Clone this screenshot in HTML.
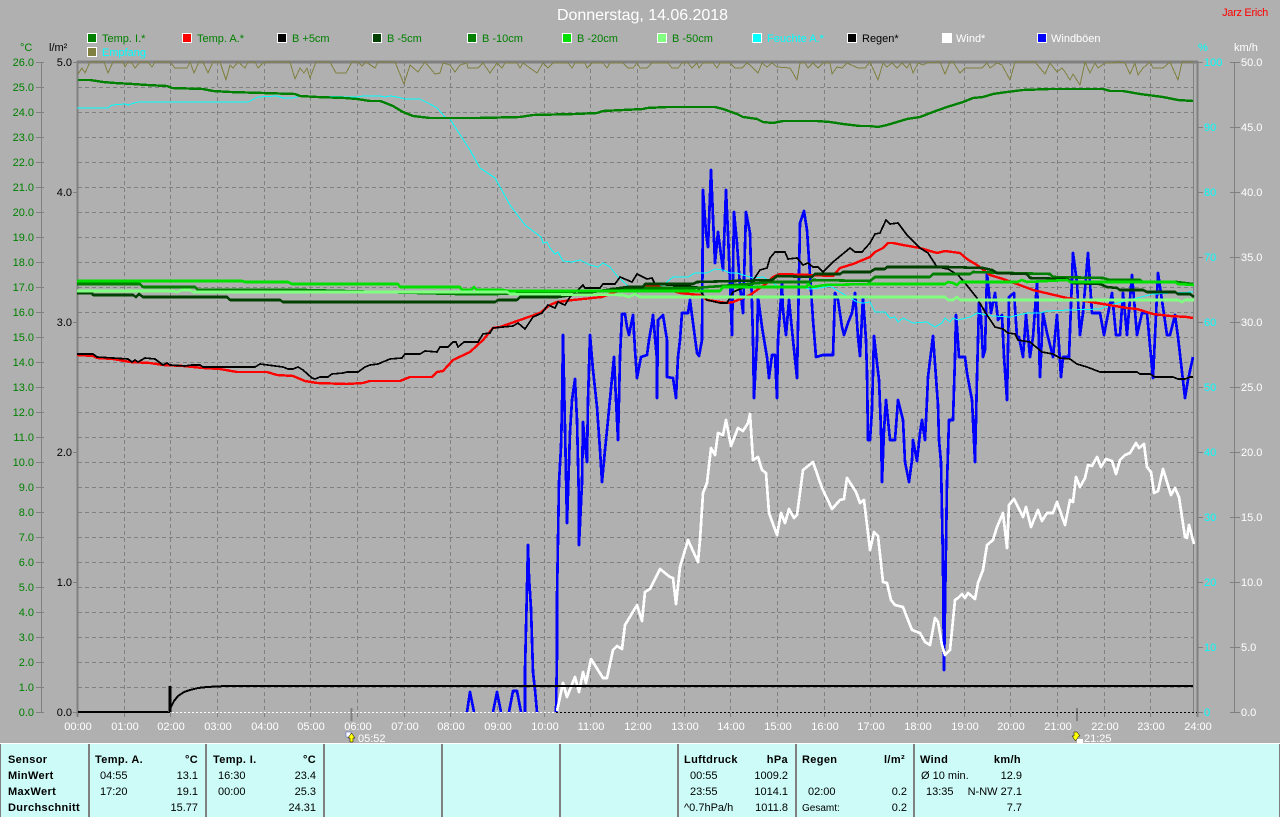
<!DOCTYPE html>
<html><head><meta charset="utf-8"><title>Donnerstag, 14.06.2018</title>
<style>
html,body{margin:0;padding:0;background:#b0b0b0;width:1280px;height:817px;overflow:hidden}
svg{display:block}
text{font-family:"Liberation Sans",sans-serif;font-size:11px}
.g{fill:#008000}.w{fill:#fff}.c{fill:#00ffff}.k{fill:#000}
.e{text-anchor:end}.m{text-anchor:middle}
.b{font-weight:bold;letter-spacing:.35px;fill:#000}
polyline{fill:none;stroke-linejoin:round}
.grid line{stroke:#808080;stroke-width:1;stroke-dasharray:4 3;shape-rendering:crispEdges}
.ax line{stroke:#808080;shape-rendering:crispEdges}
.data polyline{shape-rendering:crispEdges}
</style></head><body>
<svg width="1280" height="817" viewBox="0 0 1280 817" xmlns="http://www.w3.org/2000/svg">
<rect width="1280" height="817" fill="#b0b0b0"/>
<text x="642.5" y="20" class="m" style="font-size:16px;fill:#fff" textLength="171">Donnerstag, 14.06.2018</text>
<text x="1268" y="16" class="e" style="fill:#f00;letter-spacing:-.3px">Jarz Erich</text>

<g stroke="#fff" stroke-width="1" shape-rendering="crispEdges">
<rect x="87.5" y="33.5" width="9" height="9" fill="#008000"/>
<rect x="182.5" y="33.5" width="9" height="9" fill="#ff0000"/>
<rect x="277.5" y="33.5" width="9" height="9" fill="#000"/>
<rect x="372.5" y="33.5" width="9" height="9" fill="#004000"/>
<rect x="467.5" y="33.5" width="9" height="9" fill="#008000"/>
<rect x="562.5" y="33.5" width="9" height="9" fill="#00e000"/>
<rect x="657.5" y="33.5" width="9" height="9" fill="#80ff80"/>
<rect x="752.5" y="33.5" width="9" height="9" fill="#00ffff"/>
<rect x="847.5" y="33.5" width="9" height="9" fill="#000"/>
<rect x="942.5" y="33.5" width="9" height="9" fill="#fff"/>
<rect x="1037.5" y="33.5" width="9" height="9" fill="#0000ff"/>
<rect x="87.5" y="47.5" width="9" height="9" fill="#808040"/>
</g>
<text x="102" y="42" class="g">Temp. I.*</text>
<text x="197" y="42" class="g">Temp. A.*</text>
<text x="292" y="42" class="g">B +5cm</text>
<text x="387" y="42" class="g">B -5cm</text>
<text x="482" y="42" class="g">B -10cm</text>
<text x="577" y="42" class="g">B -20cm</text>
<text x="672" y="42" class="g">B -50cm</text>
<text x="767" y="42" class="c">Feuchte A.*</text>
<text x="862" y="42" class="k">Regen*</text>
<text x="956" y="42" class="w">Wind*</text>
<text x="1051" y="42" class="w">Windböen</text>
<text x="102" y="56" class="c">Empfang</text>

<text x="20" y="51" class="g">°C</text>
<text x="49" y="51" class="k">l/m²</text>
<text x="1198" y="51" class="c">%</text>
<text x="1234" y="51" class="w">km/h</text>

<g class="grid">
<line x1="124.5" y1="62" x2="124.5" y2="717"/><line x1="170.5" y1="62" x2="170.5" y2="717"/><line x1="217.5" y1="62" x2="217.5" y2="717"/><line x1="264.5" y1="62" x2="264.5" y2="717"/><line x1="310.5" y1="62" x2="310.5" y2="717"/><line x1="357.5" y1="62" x2="357.5" y2="717"/><line x1="404.5" y1="62" x2="404.5" y2="717"/><line x1="450.5" y1="62" x2="450.5" y2="717"/><line x1="497.5" y1="62" x2="497.5" y2="717"/><line x1="544.5" y1="62" x2="544.5" y2="717"/><line x1="590.5" y1="62" x2="590.5" y2="717"/><line x1="637.5" y1="62" x2="637.5" y2="717"/><line x1="684.5" y1="62" x2="684.5" y2="717"/><line x1="730.5" y1="62" x2="730.5" y2="717"/><line x1="777.5" y1="62" x2="777.5" y2="717"/><line x1="824.5" y1="62" x2="824.5" y2="717"/><line x1="870.5" y1="62" x2="870.5" y2="717"/><line x1="917.5" y1="62" x2="917.5" y2="717"/><line x1="964.5" y1="62" x2="964.5" y2="717"/><line x1="1010.5" y1="62" x2="1010.5" y2="717"/><line x1="1057.5" y1="62" x2="1057.5" y2="717"/><line x1="1104.5" y1="62" x2="1104.5" y2="717"/><line x1="1150.5" y1="62" x2="1150.5" y2="717"/>
<line x1="78" y1="87.5" x2="1194" y2="87.5"/><line x1="78" y1="112.5" x2="1194" y2="112.5"/><line x1="78" y1="137.5" x2="1194" y2="137.5"/><line x1="78" y1="162.5" x2="1194" y2="162.5"/><line x1="78" y1="187.5" x2="1194" y2="187.5"/><line x1="78" y1="212.5" x2="1194" y2="212.5"/><line x1="78" y1="237.5" x2="1194" y2="237.5"/><line x1="78" y1="262.5" x2="1194" y2="262.5"/><line x1="78" y1="287.5" x2="1194" y2="287.5"/><line x1="78" y1="312.5" x2="1194" y2="312.5"/><line x1="78" y1="337.5" x2="1194" y2="337.5"/><line x1="78" y1="362.5" x2="1194" y2="362.5"/><line x1="78" y1="387.5" x2="1194" y2="387.5"/><line x1="78" y1="412.5" x2="1194" y2="412.5"/><line x1="78" y1="437.5" x2="1194" y2="437.5"/><line x1="78" y1="462.5" x2="1194" y2="462.5"/><line x1="78" y1="487.5" x2="1194" y2="487.5"/><line x1="78" y1="512.5" x2="1194" y2="512.5"/><line x1="78" y1="537.5" x2="1194" y2="537.5"/><line x1="78" y1="562.5" x2="1194" y2="562.5"/><line x1="78" y1="587.5" x2="1194" y2="587.5"/><line x1="78" y1="612.5" x2="1194" y2="612.5"/><line x1="78" y1="637.5" x2="1194" y2="637.5"/><line x1="78" y1="662.5" x2="1194" y2="662.5"/><line x1="78" y1="687.5" x2="1194" y2="687.5"/>
</g>

<g class="ax">
<line x1="77.5" y1="61" x2="77.5" y2="717" stroke-width="2"/>
<line x1="77" y1="62" x2="1198" y2="62" stroke-width="3"/>
<line x1="1193.5" y1="62" x2="1193.5" y2="712" stroke-width="1"/>
<line x1="1197.5" y1="61" x2="1197.5" y2="717" stroke-width="2"/>
<line x1="41.5" y1="62" x2="41.5" y2="712"/>
<line x1="1234.5" y1="62" x2="1234.5" y2="712"/>
<line x1="36" y1="62.5" x2="44" y2="62.5"/><line x1="36" y1="87.5" x2="44" y2="87.5"/><line x1="36" y1="112.5" x2="44" y2="112.5"/><line x1="36" y1="137.5" x2="44" y2="137.5"/><line x1="36" y1="162.5" x2="44" y2="162.5"/><line x1="36" y1="187.5" x2="44" y2="187.5"/><line x1="36" y1="212.5" x2="44" y2="212.5"/><line x1="36" y1="237.5" x2="44" y2="237.5"/><line x1="36" y1="262.5" x2="44" y2="262.5"/><line x1="36" y1="287.5" x2="44" y2="287.5"/><line x1="36" y1="312.5" x2="44" y2="312.5"/><line x1="36" y1="337.5" x2="44" y2="337.5"/><line x1="36" y1="362.5" x2="44" y2="362.5"/><line x1="36" y1="387.5" x2="44" y2="387.5"/><line x1="36" y1="412.5" x2="44" y2="412.5"/><line x1="36" y1="437.5" x2="44" y2="437.5"/><line x1="36" y1="462.5" x2="44" y2="462.5"/><line x1="36" y1="487.5" x2="44" y2="487.5"/><line x1="36" y1="512.5" x2="44" y2="512.5"/><line x1="36" y1="537.5" x2="44" y2="537.5"/><line x1="36" y1="562.5" x2="44" y2="562.5"/><line x1="36" y1="587.5" x2="44" y2="587.5"/><line x1="36" y1="612.5" x2="44" y2="612.5"/><line x1="36" y1="637.5" x2="44" y2="637.5"/><line x1="36" y1="662.5" x2="44" y2="662.5"/><line x1="36" y1="687.5" x2="44" y2="687.5"/><line x1="36" y1="712.5" x2="44" y2="712.5"/>
<line x1="73" y1="192.5" x2="77" y2="192.5"/><line x1="73" y1="322.5" x2="77" y2="322.5"/><line x1="73" y1="452.5" x2="77" y2="452.5"/><line x1="73" y1="582.5" x2="77" y2="582.5"/><line x1="73" y1="712.5" x2="77" y2="712.5"/><line x1="73" y1="62.5" x2="77" y2="62.5"/>
<line x1="1198" y1="62.5" x2="1203" y2="62.5"/><line x1="1198" y1="127.5" x2="1203" y2="127.5"/><line x1="1198" y1="192.5" x2="1203" y2="192.5"/><line x1="1198" y1="257.5" x2="1203" y2="257.5"/><line x1="1198" y1="322.5" x2="1203" y2="322.5"/><line x1="1198" y1="387.5" x2="1203" y2="387.5"/><line x1="1198" y1="452.5" x2="1203" y2="452.5"/><line x1="1198" y1="517.5" x2="1203" y2="517.5"/><line x1="1198" y1="582.5" x2="1203" y2="582.5"/><line x1="1198" y1="647.5" x2="1203" y2="647.5"/><line x1="1198" y1="712.5" x2="1203" y2="712.5"/>
<line x1="1230" y1="62.5" x2="1240" y2="62.5"/><line x1="1230" y1="127.5" x2="1240" y2="127.5"/><line x1="1230" y1="192.5" x2="1240" y2="192.5"/><line x1="1230" y1="257.5" x2="1240" y2="257.5"/><line x1="1230" y1="322.5" x2="1240" y2="322.5"/><line x1="1230" y1="387.5" x2="1240" y2="387.5"/><line x1="1230" y1="452.5" x2="1240" y2="452.5"/><line x1="1230" y1="517.5" x2="1240" y2="517.5"/><line x1="1230" y1="582.5" x2="1240" y2="582.5"/><line x1="1230" y1="647.5" x2="1240" y2="647.5"/><line x1="1230" y1="712.5" x2="1240" y2="712.5"/>
<line x1="351.5" y1="708" x2="351.5" y2="721" stroke-width="2"/>
<line x1="1077" y1="708" x2="1077" y2="721" stroke-width="2"/>
</g>

<g class="g e">
<text x="34" y="66">26.0</text><text x="34" y="91">25.0</text><text x="34" y="116">24.0</text><text x="34" y="141">23.0</text><text x="34" y="166">22.0</text><text x="34" y="191">21.0</text><text x="34" y="216">20.0</text><text x="34" y="241">19.0</text><text x="34" y="266">18.0</text><text x="34" y="291">17.0</text><text x="34" y="316">16.0</text><text x="34" y="341">15.0</text><text x="34" y="366">14.0</text><text x="34" y="391">13.0</text><text x="34" y="416">12.0</text><text x="34" y="441">11.0</text><text x="34" y="466">10.0</text><text x="34" y="491">9.0</text><text x="34" y="516">8.0</text><text x="34" y="541">7.0</text><text x="34" y="566">6.0</text><text x="34" y="591">5.0</text><text x="34" y="616">4.0</text><text x="34" y="641">3.0</text><text x="34" y="666">2.0</text><text x="34" y="691">1.0</text><text x="34" y="716">0.0</text>
</g>
<g class="k e">
<text x="72" y="66">5.0</text><text x="72" y="196">4.0</text><text x="72" y="326">3.0</text><text x="72" y="456">2.0</text><text x="72" y="586">1.0</text><text x="72" y="716">0.0</text>
</g>
<g class="c">
<text x="1204" y="66">100</text><text x="1204" y="131">90</text><text x="1204" y="196">80</text><text x="1204" y="261">70</text><text x="1204" y="326">60</text><text x="1204" y="391">50</text><text x="1204" y="456">40</text><text x="1204" y="521">30</text><text x="1204" y="586">20</text><text x="1204" y="651">10</text><text x="1204" y="716">0</text>
</g>
<g class="w">
<text x="1241" y="66">50.0</text><text x="1241" y="131">45.0</text><text x="1241" y="196">40.0</text><text x="1241" y="261">35.0</text><text x="1241" y="326">30.0</text><text x="1241" y="391">25.0</text><text x="1241" y="456">20.0</text><text x="1241" y="521">15.0</text><text x="1241" y="586">10.0</text><text x="1241" y="651">5.0</text><text x="1241" y="716">0.0</text>
</g>
<g class="w m">
<text x="78" y="730">00:00</text><text x="125" y="730">01:00</text><text x="171" y="730">02:00</text><text x="218" y="730">03:00</text><text x="265" y="730">04:00</text><text x="311" y="730">05:00</text><text x="358" y="730">06:00</text><text x="405" y="730">07:00</text><text x="451" y="730">08:00</text><text x="498" y="730">09:00</text><text x="545" y="730">10:00</text><text x="591" y="730">11:00</text><text x="638" y="730">12:00</text><text x="685" y="730">13:00</text><text x="731" y="730">14:00</text><text x="778" y="730">15:00</text><text x="825" y="730">16:00</text><text x="871" y="730">17:00</text><text x="918" y="730">18:00</text><text x="965" y="730">19:00</text><text x="1011" y="730">20:00</text><text x="1058" y="730">21:00</text><text x="1105" y="730">22:00</text><text x="1151" y="730">23:00</text><text x="1198" y="730">24:00</text>
</g>

<g class="data">
<polyline stroke="#808040" stroke-width="1" points="78,74 82,68 85,73 90,62 104,62 108,73 113,62 123,62 125,67 128,62 132,63 135,68 140,62 148,62 152,67 155,62 170,62 175,68 187,68 190,62 194,73 199,62 203,62 208,73 213,62 220,62 226,80 230,65 233,68 238,62 245,68 248,62 255,62 258,68 263,63 268,62 290,62 295,79 300,68 304,73 307,68 310,78 316,62 330,62 336,73 346,73 352,62 358,62 362,66 366,62 375,68 378,62 395,62 404,84 410,65 418,72 425,62 430,68 435,74 440,73 443,63 450,65 455,72 460,65 467,63 468,68 478,68 483,63 490,73 497,63 502,68 505,63 517,63 520,68 523,63 530,68 537,73 543,63 548,68 553,63 568,63 572,68 575,63 585,63 587,68 592,63 603,63 607,68 610,63 623,63 628,68 633,68 637,63 640,68 647,68 652,63 668,63 672,68 678,68 682,63 688,63 692,68 697,63 699,68 703,63 713,63 717,68 720,63 730,63 735,68 742,68 747,63 750,65 758,73 762,63 767,67 772,63 777,67 790,68 797,80 800,63 805,63 808,68 813,63 818,68 823,63 830,63 832,74 837,67 842,68 847,63 858,68 865,68 870,62 878,80 883,63 887,67 892,63 897,68 902,63 907,68 910,63 913,73 918,63 923,65 927,63 940,62 945,74 950,62 953,62 960,73 965,68 982,68 987,63 990,68 997,63 1002,65 1010,80 1015,62 1035,62 1040,68 1045,74 1050,63 1057,72 1062,68 1065,72 1070,80 1073,74 1080,85 1085,62 1090,73 1095,63 1098,68 1105,63 1113,63 1118,62 1125,63 1130,74 1135,63 1138,75 1143,68 1150,62 1153,68 1163,68 1170,62 1178,80 1182,62 1193,62"/>

<polyline stroke="#0000ff" stroke-width="2.7" points="467,712 470,692 474,712"/>
<polyline stroke="#0000ff" stroke-width="2.7" points="493,712 497,692 501,712"/>
<polyline stroke="#0000ff" stroke-width="2.7" points="509,712 513,691 517,691 521,712"/>
<polyline stroke="#0000ff" stroke-width="2.7" points="525,712 525,670 526,628 527,587 528,545 529,577 531,608 532,640 533,672 535,690 537,712"/>
<polyline stroke="#0000ff" stroke-width="2.7" points="556,712 557,655 557,597 558,540 559,482 561,447 562,408 563,335 565,428 567,523 568,493 570,432 572,400 575,379 577,420 579,503 579,545 582,483 583,422 585,445 587,462 588,400 590,335 593,370 597,407 600,450 602,482 605,450 608,420 612,378 614,357 616,400 618,440 620,357 622,314 625,314 627,327 629,335 633,315 635,350 637,378 641,357 647,355 649,340 652,323 653,315 657,360 657,398 658,320 663,315 667,340 667,377 673,378 676,398 678,357 680,340 682,313 688,313 690,300 697,353 699,356 702,340 703,190 706,233 708,247 711,170 713,217 715,263 718,232 723,270 726,190 728,233 732,335 734,212 737,243 740,287 743,313 746,212 750,233 753,340 754,398 757,340 758,297 762,327 767,357 769,378 772,355 775,355 777,398 778,340 782,283 783,310 786,335 789,300 793,340 797,378 800,223 804,211 807,230 810,275 813,320 816,357 823,355 833,355 835,293 838,300 842,327 844,335 848,323 852,313 855,293 858,337 860,356 863,297 866,340 867,373 868,440 870,440 872,410 874,336 877,363 879,380 881,430 882,482 884,430 886,400 889,430 890,440 895,440 898,400 903,420 905,462 909,482 912,460 913,440 917,461 920,433 922,420 925,440 927,400 928,377 933,336 938,405 939,440 941,462 942,513 943,565 944,670 946,545 947,483 949,420 953,420 955,357 956,315 957,327 959,357 965,357 967,373 972,400 975,462 977,377 979,303 981,317 983,357 985,350 987,273 991,313 995,293 998,320 1002,315 1004,357 1007,400 1009,297 1014,293 1017,337 1019,337 1023,357 1026,315 1030,357 1033,337 1037,283 1040,377 1043,313 1047,333 1053,357 1057,315 1061,377 1063,357 1069,357 1073,253 1077,283 1080,335 1083,313 1088,253 1092,313 1100,313 1104,335 1112,293 1116,335 1120,335 1123,293 1127,335 1132,275 1137,335 1142,313 1147,313 1153,378 1158,273 1167,335 1170,335 1175,315 1178,337 1185,398 1188,380 1193,357"/>

<polyline stroke="#fff" stroke-width="2.7" points="557,711 563,683 567,697 575,677 579,692 583,672 586,683 591,659 603,678 607,678 613,650 617,646 622,649 625,625 637,605 642,621 645,592 650,589 660,569 670,577 673,578 676,604 680,567 688,540 698,562 700,540 703,493 707,483 711,448 715,455 718,433 723,435 726,420 731,446 738,428 743,431 748,423 750,414 753,460 758,457 762,470 766,473 769,513 777,535 781,513 785,523 789,509 794,518 797,515 803,470 813,462 822,488 832,509 840,500 844,499 847,478 856,492 860,503 864,500 868,533 870,550 874,532 878,536 883,582 887,583 891,600 895,605 903,607 908,620 912,630 920,633 925,642 930,645 935,618 938,622 942,645 945,655 950,650 955,600 958,598 962,594 965,598 968,593 975,599 978,583 983,570 987,545 993,540 997,527 1003,513 1007,548 1009,505 1014,499 1023,517 1026,507 1031,527 1038,510 1042,521 1047,513 1053,513 1057,502 1065,525 1070,500 1073,502 1076,477 1080,487 1085,478 1088,465 1092,466 1097,457 1101,467 1106,459 1112,461 1116,474 1120,460 1125,455 1130,453 1136,443 1139,448 1144,444 1147,467 1151,472 1154,493 1158,491 1163,469 1171,495 1175,488 1179,497 1185,537 1187,538 1189,525 1194,544"/>

<line x1="168" y1="712.5" x2="1197" y2="712.5" stroke="#000" stroke-width="1" stroke-dasharray="2 2" shape-rendering="crispEdges"/>
<line x1="170" y1="712.5" x2="556" y2="712.5" stroke="#fff" stroke-width="1" stroke-dasharray="2 2" stroke-dashoffset="2" shape-rendering="crispEdges"/>
<polyline stroke="#000" stroke-width="2" points="78,712 168,712"/>
<polyline stroke="#000" stroke-width="3" points="170,712 170,686"/>
<polyline stroke="#000" stroke-width="2" points="170,709 174,701 178,696 184,692 190,690 198,688 207,687 226,686 1193,686"/>

<polyline stroke="#00ffff" stroke-width="1" points="77,108 108,108 112,105 125,104 128,105 138,102 153,102 248,102 258,97 277,96 283,98 293,98 300,96 357,97 363,96 380,96 385,97 390,96 397,97 405,99 420,99 430,104 437,108 445,117 450,119 457,130 470,150 480,168 495,178 510,205 525,225 541,237 543,243 547,242 550,248 555,254 558,252 563,261 572,262 580,260 590,265 598,267 603,263 610,267 618,277 628,286 640,290 655,290 667,282 673,277 678,277 688,277 695,273 707,273 715,269 723,270 730,273 737,273 743,275 753,278 763,277 773,283 780,288 793,286 810,289 820,288 830,286 845,295 857,302 863,303 870,302 875,312 885,312 890,318 895,317 898,322 903,318 913,323 927,322 935,327 942,323 945,318 950,322 953,318 958,320 970,317 977,313 987,315 993,316 1010,317 1027,313 1040,313 1047,311 1070,310 1100,309 1110,305 1137,298 1153,294 1193,292"/>

<polyline stroke="#008000" stroke-width="2.4" points="78,80 90,80 103,82 115,83 133,84 147,85 167,86 172,88 203,89 213,91 230,92 263,93 295,94 300,96 317,97 345,98 357,99 370,101 380,101 383,102 393,106 403,112 413,116 430,118 478,118 520,117 533,115 575,114 597,113 603,111 643,109 647,108 667,107 715,107 723,109 737,114 743,117 757,119 763,122 773,123 783,121 817,121 830,122 843,124 860,126 870,126 878,127 887,125 897,122 907,119 920,117 933,112 947,107 963,102 973,98 983,97 993,94 1007,92 1023,90 1050,89 1103,89 1110,91 1123,91 1140,94 1163,97 1178,100 1193,101"/>

<polyline stroke="#ff0000" stroke-width="2.4" points="77,355 93,356 97,358 113,359 130,362 150,363 163,365 183,366 203,368 220,369 237,372 267,372 277,375 293,376 305,381 317,383 347,384 363,383 370,381 400,381 410,377 432,377 437,372 443,371 453,360 470,352 483,340 493,328 500,327 520,320 540,313 550,305 557,302 573,300 602,297 615,292 630,288 657,286 663,288 680,293 700,295 707,300 727,303 733,302 750,295 757,290 767,283 773,277 780,274 810,275 833,276 840,268 853,264 870,257 875,252 883,248 888,243 893,243 903,245 920,248 937,253 945,251 960,253 967,259 977,265 990,275 1003,279 1017,284 1033,290 1050,294 1067,298 1103,304 1127,308 1137,309 1153,314 1170,316 1187,317 1193,318"/>

<polyline stroke="#000" stroke-width="1.7" points="77,354 93,354 97,357 113,358 128,359 132,362 135,360 138,362 145,358 155,359 163,365 167,363 170,365 185,366 192,365 200,365 203,367 255,367 260,364 283,367 288,369 293,369 298,367 303,370 312,378 315,379 320,377 328,377 332,374 343,373 347,372 358,372 365,367 370,365 378,364 390,359 402,358 405,354 420,354 425,351 437,352 440,347 448,347 453,342 456,342 458,347 464,342 478,342 483,334 490,333 493,328 513,326 518,323 525,329 533,317 542,313 548,305 555,308 558,302 565,305 570,297 580,288 583,285 585,288 600,288 603,284 615,284 620,277 632,282 637,274 647,279 652,278 655,284 667,285 697,287 707,300 720,303 727,303 733,292 750,285 760,270 767,268 770,258 775,252 785,252 788,259 797,258 803,265 808,263 813,267 818,267 823,272 833,262 850,248 855,252 862,252 870,243 875,234 880,233 886,220 890,224 898,223 907,235 920,248 928,253 937,267 948,269 958,275 965,283 977,298 985,312 995,327 1003,329 1008,333 1015,334 1018,340 1030,342 1042,352 1053,354 1060,358 1070,359 1077,364 1087,367 1100,372 1137,372 1140,374 1150,374 1155,377 1173,377 1178,379 1185,379 1190,377 1193,377"/>

<polyline stroke="#008000" stroke-width="2.6" points="77,284 140,284 143,287 195,287 198,290 305,290 457,294 497,294 620,290 628,288 695,288 773,282 810,282 813,280 870,281 875,277 930,277 933,274 970,274 973,272 1050,274 1053,277 1103,278 1110,280 1140,280 1143,282 1177,282 1193,284"/>
<polyline stroke="#004000" stroke-width="2.6" points="77,293 92,293 93,295 133,295 136,297 139,294 143,297 227,297 230,300 280,300 283,302 495,302 498,300 517,300 520,297 558,297 627,287 643,287 645,284 693,284 697,282 772,280 777,276 812,277 815,274 840,274 843,272 870,272 875,269 885,269 887,267 947,267 983,268 992,270 997,273 1027,274 1030,278 1067,279 1073,283 1100,284 1107,287 1117,288 1120,290 1143,290 1147,292 1175,292 1178,294 1190,294 1194,297"/>
<polyline stroke="#00e000" stroke-width="2.6" points="77,281 242,281 245,282 288,282 292,284 398,284 400,287 460,287 462,290 471,290 474,287 477,290 503,290 508,291 720,291 723,287 773,287 807,287 808,284 812,287 825,285 870,284 945,284 948,282 953,283 957,285 960,282 1017,282 1022,280 1027,282 1067,280 1070,282 1175,282 1178,284 1194,285"/>
<polyline stroke="#80ff80" stroke-width="2.6" points="77,291 173,291 177,292 182,290 190,290 193,292 507,292 510,294 623,295 629,297 635,294 640,297 870,297 945,297 948,300 953,300 957,297 960,300 1178,300 1182,302 1185,300 1194,300"/>
</g>

<g>
<rect x="346" y="732" width="5" height="5" fill="#fff" stroke="#6070c0" stroke-width=".6"/>
<path d="M350 742h3v-4h2l-3.500-5-3.500 5h2z" fill="#ffff00" stroke="#000" stroke-width=".5"/>
<text x="358" y="742" class="w">05:52</text>
<path d="M1075 741h3v-4h2l-3.500-5-3.500 5h-1z" transform="rotate(180 1076 736.500)" fill="#ffff00" stroke="#000" stroke-width=".5"/>
<rect x="1077" y="739" width="6" height="4" fill="#fff"/>
<text x="1084" y="742" class="w">21:25</text>
</g>

<rect x="0" y="743" width="1280" height="74" fill="#ccfbf8"/>
<rect x="0" y="743" width="1280" height="1" fill="#fff"/>
<rect x="0" y="744" width="1" height="73" fill="#808080"/>
<g fill="#808080" shape-rendering="crispEdges">
<rect x="88" y="744" width="2" height="73"/><rect x="205" y="744" width="2" height="73"/><rect x="323" y="744" width="2" height="73"/><rect x="441" y="744" width="2" height="73"/><rect x="559" y="744" width="2" height="73"/><rect x="677" y="744" width="2" height="73"/><rect x="795" y="744" width="2" height="73"/><rect x="913" y="744" width="2" height="73"/><rect x="1279" y="744" width="1" height="73"/>
</g>
<g class="b">
<text x="8" y="763">Sensor</text><text x="8" y="779">MinWert</text><text x="8" y="795">MaxWert</text><text x="8" y="811">Durchschnitt</text>
<text x="95" y="763">Temp. A.</text><text x="198" y="763" class="e">°C</text>
<text x="213" y="763">Temp. I.</text><text x="316" y="763" class="e">°C</text>
<text x="684" y="763">Luftdruck</text><text x="788" y="763" class="e">hPa</text>
<text x="802" y="763">Regen</text><text x="905" y="763" class="e">l/m²</text>
<text x="920" y="763">Wind</text><text x="1021" y="763" class="e">km/h</text>
</g>
<g class="k">
<text x="100" y="779">04:55</text><text x="198" y="779" class="e">13.1</text>
<text x="100" y="795">17:20</text><text x="198" y="795" class="e">19.1</text>
<text x="198" y="811" class="e">15.77</text>
<text x="218" y="779">16:30</text><text x="316" y="779" class="e">23.4</text>
<text x="218" y="795">00:00</text><text x="316" y="795" class="e">25.3</text>
<text x="316" y="811" class="e">24.31</text>
<text x="690" y="779">00:55</text><text x="788" y="779" class="e">1009.2</text>
<text x="690" y="795">23:55</text><text x="788" y="795" class="e">1014.1</text>
<text x="684" y="811">^0.7hPa/h</text><text x="788" y="811" class="e">1011.8</text>
<text x="808" y="795">02:00</text><text x="907" y="795" class="e">0.2</text>
<text x="802" y="811" style="font-size:10px">Gesamt:</text><text x="907" y="811" class="e">0.2</text>
<text x="921" y="779">Ø 10 min.</text><text x="1022" y="779" class="e">12.9</text>
<text x="926" y="795">13:35</text><text x="1022" y="795" class="e">N-NW 27.1</text>
<text x="1022" y="811" class="e">7.7</text>
</g>
</svg>
</body></html>
